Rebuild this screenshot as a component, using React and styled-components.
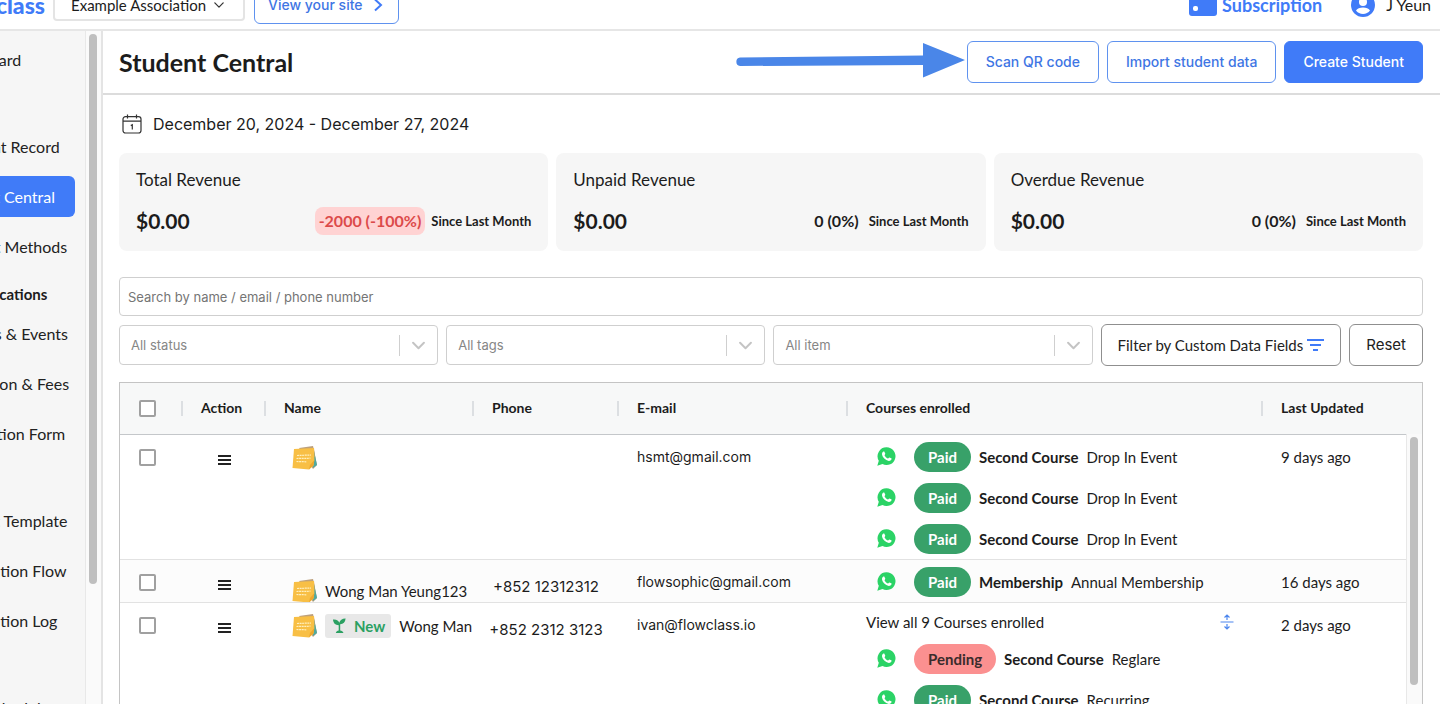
import React from 'react';
import styled, { createGlobalStyle, css } from 'styled-components';

const lato = 'Lato, "Liberation Sans", sans-serif';
const inter = 'Inter, "Liberation Sans", sans-serif';
const blue = '#407bf8';

const GlobalStyle = createGlobalStyle`
  *, *::before, *::after { box-sizing: border-box; }
  body { margin: 0; background: #fff; color: #1c1c1c; font-family: ${lato}; font-size: 16px; line-height: 20px; }
  button, input, select { font: inherit; color: inherit; margin: 0; }
  h1, h2, p, ul { margin: 0; padding: 0; }
  ul { list-style: none; }
`;

const Shell = styled.div`
  display: flex;
  flex-direction: column;
  height: 100vh;
  overflow: hidden;
`;

const TopBar = styled.header`
  flex: none;
  display: flex;
  align-items: center;
  height: 50px;
  margin-top: -19px;
  padding-right: 9px;
  border-bottom: 2px solid #e6e6e6;
`;

const Logo = styled.a`
  margin-left: -48px;
  width: 93px;
  display: flex;
  justify-content: flex-end;
  font: 900 23px/28px ${lato};
  color: ${blue};
  text-decoration: none;
`;

const OrgButton = styled.button`
  display: flex;
  align-items: center;
  gap: 8px;
  height: 32px;
  margin-left: 8px;
  padding: 0 19px 0 16px;
  border: 2px solid #e4e4e4;
  border-radius: 4px;
  background: #fff;
  font-size: 15px;
  white-space: nowrap;
`;

const Button = styled.button`
  display: flex;
  align-items: center;
  justify-content: center;
  gap: 4px;
  height: 42px;
  padding: 0 ${(p) => (p.$plain ? '16px' : '18px')};
  border: 1px solid ${(p) => (p.$plain ? '#8f8f8f' : '#5f92ef')};
  border-radius: 6px;
  background: #fff;
  color: ${(p) => (p.$plain ? '#222' : '#3f76e4')};
  font: ${(p) => (p.$plain ? '400 15px' : '500 14px')}/20px ${(p) => (p.$lato ? lato : inter)};
  white-space: nowrap;
  ${(p) => p.$primary && css`
    background: ${blue};
    border-color: ${blue};
    color: #fff;
  `}
`;

const SiteButton = styled(Button)`
  height: 38px;
  margin-left: 9px;
  padding: 0 13px;
  gap: 8px;
`;

const Account = styled.nav`
  display: flex;
  align-items: center;
  margin-left: auto;
`;

const SubscriptionLink = styled.a`
  display: flex;
  align-items: center;
  gap: 5px;
  margin-right: 29px;
  color: ${blue};
  font-size: 18px;
  font-weight: 700;
  text-decoration: none;
`;

const UserButton = styled.button`
  display: flex;
  align-items: center;
  gap: 11px;
  padding: 0;
  border: 0;
  background: none;
`;

const Columns = styled.div`
  flex: 1;
  display: flex;
  min-height: 0;
`;

const Sidebar = styled.aside`
  flex: none;
  display: flex;
  width: 103px;
  background: #f6f6f6;
  border-right: 2px solid #e4e4e4;
`;

const Menu = styled.nav`
  flex: 1;
  margin-left: -70px;
  padding: 8px 10px 0 0;
  overflow: hidden;
`;

const MenuGroup = styled.ul`
  display: flex;
  flex-direction: column;
  gap: 9px;
  & + & { margin-top: 46px; }
`;

const MenuHeading = styled.h2`
  padding: 17px 0 9px 5px;
  font: 700 15px/20px ${lato};
`;

const MenuLink = styled.a`
  display: flex;
  align-items: center;
  height: 41px;
  padding-left: 15px;
  border-radius: 6px;
  color: ${(p) => (p.$active ? '#fff' : '#222')};
  background: ${(p) => (p.$active ? blue : 'transparent')};
  text-decoration: none;
  white-space: nowrap;
`;

const Track = styled.div`
  flex: none;
  width: 16px;
  padding: 3px 4px 0 3px;
  background: #fafafa;
  border-left: 1px solid #e8e8e8;
`;

const Thumb = styled.div`
  width: 8px;
  height: ${(p) => p.$length};
  border-radius: 4px;
  background: #bfbfbf;
`;

const Main = styled.main`
  flex: 1;
  min-width: 0;
  overflow: hidden;
`;

const TitleBar = styled.div`
  display: flex;
  align-items: center;
  gap: 8px;
  height: 64px;
  padding: 0 17px 0 16px;
  border-bottom: 2px solid #dcdcdc;
`;

const Title = styled.h1`
  flex: 1;
  font: 700 25px/32px ${lato};
`;

const Pointer = styled.svg`
  flex: none;
  margin-right: -6px;
`;

const Content = styled.div`
  padding: 18px 17px 0 16px;
`;

const DateRange = styled.div`
  display: flex;
  align-items: center;
  gap: 11px;
  height: 22px;
  padding-left: 3px;
  font: 400 16px/22px ${inter};
`;

const Cards = styled.div`
  display: grid;
  grid-template-columns: repeat(3, 1fr);
  gap: 8px;
  margin-top: 18px;
`;

const Card = styled.section`
  display: flex;
  flex-direction: column;
  gap: 16px;
  height: 98px;
  padding: 17px 17px 0;
  border-radius: 8px;
  background: #f6f6f6;
`;

const CardTitle = styled.h2`
  font: 400 17px/20px ${lato};
`;

const CardRow = styled.div`
  display: flex;
  align-items: center;
  height: 30px;
`;

const Amount = styled.strong`
  flex: 1;
  font-size: 21px;
`;

const Change = styled.span`
  padding: 4px;
  border-radius: 8px;
  font: 700 16px/20px ${lato};
  ${(p) => p.$down && css`
    background: #ffd3d3;
    color: #dc4a4a;
  `}
`;

const Since = styled.span`
  margin-left: 6px;
  font-size: 13px;
  font-weight: 700;
`;

const Search = styled.input`
  display: block;
  width: 100%;
  height: 39px;
  margin-top: 26px;
  padding: 0 8px;
  border: 1px solid #cfcfcf;
  border-radius: 4px;
  font: 400 13px/20px ${inter};
  &::placeholder { color: #757575; opacity: 1; }
`;

const Filters = styled.div`
  display: flex;
  align-items: center;
  gap: 8px;
  margin-top: 8px;
`;

const SelectBox = styled.label`
  position: relative;
  flex: 1;
  height: 40px;
`;

const Select = styled.select`
  appearance: none;
  width: 100%;
  height: 100%;
  padding: 0 48px 0 11px;
  border: 1px solid #cfcfcf;
  border-radius: 4px;
  background: #fff;
  color: #868686;
  font: 400 13px/20px ${inter};
`;

const SelectMark = styled.span`
  position: absolute;
  top: 10px;
  right: 13px;
  display: flex;
  align-items: center;
  height: 21px;
  padding-left: 12px;
  border-left: 1px solid #cfcfcf;
  pointer-events: none;
`;

const TableFrame = styled.div`
  position: relative;
  height: 400px;
  margin-top: 16px;
  border: 1px solid #c4c4c4;
  overflow: hidden;
`;

const Table = styled.table`
  width: 100%;
  table-layout: fixed;
  border-collapse: collapse;
  font-size: 15px;
`;

const Th = styled.th`
  width: ${(p) => p.$w || 'auto'};
  height: 51px;
  padding: 0 0 0 ${(p) => (p.$first ? '19px' : '20px')};
  border-bottom: 1px solid #c4c7ca;
  background: ${(p) => (p.$first ? '#f7f8f8' : 'linear-gradient(#dcdfe2, #dcdfe2) left center / 2px 15px no-repeat #f7f8f8')};
  font: 700 14px/20px ${lato};
  text-align: left;
`;

const Row = styled.tr`
  background: ${(p) => (p.$shade ? '#fcfcfc' : '#fff')};
  border-bottom: 1px solid #e2e2e2;
`;

const Td = styled.td`
  padding: ${(p) => p.$pad || '12px 0 0 20px'};
  vertical-align: top;
  white-space: nowrap;
  text-align: ${(p) => (p.$center ? 'center' : 'left')};
  ${(p) => p.$email && css`font: 400 14px/20px ${inter};`}
  ${(p) => p.$phone && css`font-family: ${inter};`}
`;

const Check = styled.input`
  appearance: none;
  display: block;
  width: 17px;
  height: 17px;
  border: 2px solid #a0a0a0;
  border-radius: 2px;
  background: #fff;
`;

const IconButton = styled.button`
  display: inline-flex;
  padding: 0;
  border: 0;
  background: none;
`;

const NameLine = styled.div`
  display: flex;
  align-items: center;
  gap: 8px;
  height: ${(p) => (p.$low ? '42px' : '24px')};
  padding-top: ${(p) => (p.$low ? '20px' : '0')};
  overflow: hidden;
`;

const NewBadge = styled.span`
  display: flex;
  align-items: center;
  gap: 8px;
  height: 24px;
  padding: 0 6px 0 8px;
  border-radius: 3px;
  background: #e8e8e8;
  color: #2ba062;
  font-weight: 700;
`;

const CourseList = styled.ul`
  display: flex;
  flex-direction: column;
  gap: 11px;
`;

const Course = styled.li`
  display: flex;
  align-items: center;
  gap: 8px;
  height: 30px;
  padding-left: 11px;
`;

const Pill = styled.span`
  margin-left: 10px;
  padding: 5px 14px;
  border-radius: 15px;
  font-weight: 700;
  background: ${(p) => (p.$pending ? '#fb9090' : '#38a169')};
  color: ${(p) => (p.$pending ? '#3a2c2c' : '#fff')};
`;

const ViewAll = styled.div`
  display: flex;
  justify-content: space-between;
  align-items: center;
  height: 24px;
  padding-right: 27px;
  margin-bottom: 10px;
`;

const TableTrack = styled(Track)`
  position: absolute;
  top: 51px;
  right: 0;
  bottom: 0;
`;

const Chevron = ({ w = 10, color = '#333', stroke = 1.5 }) => (
  <svg width={w} height={w} viewBox="0 0 12 12" fill="none" stroke={color} strokeWidth={stroke} strokeLinecap="round" strokeLinejoin="round">
    <path d="M1 3.500 6 8.500 11 3.500" />
  </svg>
);

const Note = () => (
  <svg width="25" height="24" viewBox="0 0 25 24">
    <path d="M7 2 21 0l1 4 3 15-4 4z" fill="#bda07c" />
    <path d="M20 4l2 1 3 14-4 3z" fill="#4fa9a0" />
    <path d="M19 2l3 0 .5 9-2 0z" fill="#d99a5b" />
    <path d="M2 3 22 2l.4 12-1 5.500-4.400 4L.5 22z" fill="#f8bf45" />
    <path d="M22.400 14l-1 5.500-4.400 4 1-4.500z" fill="#eda72c" />
    <path d="M5 9.500l14-.5M4.500 12.500l14-.3M4.500 15.500l10 .3" stroke="#fff0bf" strokeWidth="1.200" strokeDasharray="2 .6" />
  </svg>
);

const Burger = () => (
  <svg width="13" height="12" viewBox="0 0 13 12" fill="#222">
    <path d="M0 1h13v2H0zM0 5h13v2H0zM0 9h13v2H0z" />
  </svg>
);

const WhatsApp = () => (
  <svg width="19" height="19" viewBox="0 0 19 19">
    <path d="M9.700.300a8.900 8.900 0 1 1-4.200 16.800L.300 18.700l1.500-5A8.900 8.900 0 0 1 9.700.300z" fill="#2bd366" />
    <path d="M6.400 4.600c.5-.2.900-.1 1.100.3l.8 1.900c.1.400-.7 1.200-.8 1.500.7 1.500 1.900 2.600 3.400 3.200.4 0 1.100-1.200 1.500-1.100l1.900.9c.4.200.300.700.1 1.200-.4 1-1.600 1.500-2.600 1.400-3.300-.5-6.500-3.600-6.800-6.600 0-1.200.6-2.400 1.400-2.700z" fill="#fff" />
  </svg>
);

const Sprout = () => (
  <svg width="13" height="16" viewBox="0 0 13 16" fill="#2ba062">
    <path d="M0 1.500c3.500-.3 5.700 1 6.300 3.300C7 2.200 9.200.5 12.600.6c-.3 3.600-2.300 5.600-5.400 5.700v6.200c1.500.2 2.800.9 3.300 2.500H2.800c.4-1.500 1.500-2.300 2.900-2.500V7.200C2.300 7.200.2 5 0 1.500z" />
  </svg>
);

const Calendar = () => (
  <svg width="20" height="20" viewBox="0 0 20 20" fill="none" stroke="#333" strokeWidth="1.200">
    <rect x="1" y="2.600" width="18" height="16.400" rx="2.500" />
    <path d="M1 7.200h18M5.500.5v4M14.500.5v4M8.800 11.600l1.500-.8v4.800" />
  </svg>
);

const FilterIcon = () => (
  <svg width="17" height="12" viewBox="0 0 17 12" fill={blue}>
    <path d="M0 0h17v2H0zM3 5h11v2H3zM6 10h5v2H6z" />
  </svg>
);

const Expand = () => (
  <svg width="14" height="16" viewBox="0 0 14 16" fill="none" stroke="#4c86ee" strokeWidth="1.200">
    <path d="M.5 8h13M7 1v5M7 10v5M4.500 3.500 7 1l2.500 2.500M4.500 12.500 7 15l2.500-2.500" />
  </svg>
);

const menu = [
  { items: ['Dashboard'] },
  { items: ['Payment Record', 'Student Central', 'Contact Methods'] },
  { heading: 'Communications', items: ['Courses & Events', 'Admission & Fees', 'Application Form'] },
  { items: ['Student Template', 'Automation Flow', 'Automation Log'] },
  { items: ['Class Schedule'] },
];

const cards = [
  { title: 'Total Revenue', amount: '$0.00', change: '-2000 (-100%)', down: true },
  { title: 'Unpaid Revenue', amount: '$0.00', change: '0 (0%)' },
  { title: 'Overdue Revenue', amount: '$0.00', change: '0 (0%)' },
];

const dropIn = { status: 'Paid', name: 'Second Course', plan: 'Drop In Event' };

const students = [
  { id: 1, email: 'hsmt@gmail.com', updated: '9 days ago', courses: [dropIn, dropIn, dropIn] },
  {
    id: 2, name: 'Wong Man Yeung123', low: true, phone: '+852 12312312', email: 'flowsophic@gmail.com', updated: '16 days ago',
    courses: [{ status: 'Paid', name: 'Membership', plan: 'Annual Membership' }],
  },
  {
    id: 3, name: 'Wong Man', isNew: true, phone: '+852 2312 3123', email: 'ivan@flowclass.io', updated: '2 days ago', total: 9,
    courses: [
      { status: 'Pending', name: 'Second Course', plan: 'Reglare' },
      { status: 'Paid', name: 'Second Course', plan: 'Recurring' },
    ],
  },
];

function SideMenu() {
  return (
    <Sidebar>
      <Menu aria-label="Main">
        {menu.map((g, i) => (
          <React.Fragment key={i}>
            {g.heading && <MenuHeading>{g.heading}</MenuHeading>}
            <MenuGroup>
              {g.items.map((t) => (
                <li key={t}><MenuLink href="#" $active={t === 'Student Central'}>{t}</MenuLink></li>
              ))}
            </MenuGroup>
          </React.Fragment>
        ))}
      </Menu>
      <Track><Thumb $length="550px" /></Track>
    </Sidebar>
  );
}

function StudentRow({ s }) {
  return (
    <Row $shade={s.low}>
      <Td $pad="14px 0 0 19px"><Check type="checkbox" aria-label={`Select ${s.email}`} /></Td>
      <Td $center $pad="15px 0 0 3px"><IconButton aria-label="Actions"><Burger /></IconButton></Td>
      <Td $pad={s.low ? '0 0 0 28px' : '11px 0 0 28px'}>
        <NameLine $low={s.low}>
          <Note />
          {s.isNew && <NewBadge><Sprout />New</NewBadge>}
          {s.name}
        </NameLine>
      </Td>
      <Td $phone $center $pad="17px 0 0 3px">{s.phone}</Td>
      <Td $email>{s.email}</Td>
      <Td $pad="7px 0 5px 20px">
        {s.total && (
          <ViewAll>
            View all {s.total} Courses enrolled
            <IconButton aria-label="Expand"><Expand /></IconButton>
          </ViewAll>
        )}
        <CourseList>
          {s.courses.map((c, i) => (
            <Course key={i}>
              <WhatsApp />
              <Pill $pending={c.status === 'Pending'}>{c.status}</Pill>
              <strong>{c.name}</strong>
              <span>{c.plan}</span>
            </Course>
          ))}
        </CourseList>
      </Td>
      <Td>{s.updated}</Td>
    </Row>
  );
}

export default function App() {
  return (
    <Shell>
      <GlobalStyle />
      <TopBar>
        <Logo href="#">flowclass</Logo>
        <OrgButton>Example Association <Chevron /></OrgButton>
        <SiteButton>
          View your site
          <svg width="14" height="14" viewBox="0 0 14 14" fill="none" stroke={blue} strokeWidth="2"><path d="M4 1.500 10 7l-6 5.500" /></svg>
        </SiteButton>
        <Account>
          <SubscriptionLink href="#">
            <svg width="28" height="22" viewBox="0 0 28 22"><rect width="28" height="22" rx="3" fill={blue} /><rect x="4" y="12" width="5" height="5" rx="2" fill="#fff" /></svg>
            Subscription
          </SubscriptionLink>
          <UserButton>
            <svg width="24" height="24" viewBox="0 0 24 24"><circle cx="12" cy="12" r="12" fill={blue} /><circle cx="12" cy="9" r="4" fill="#fff" /><path d="M5 17.500c2-4 12-4 14 0-3 4.500-11 4.500-14 0z" fill="#fff" /></svg>
            J Yeun
          </UserButton>
        </Account>
      </TopBar>
      <Columns>
        <SideMenu />
        <Main>
          <TitleBar>
            <Title>Student Central</Title>
            <Pointer width="230" height="40" viewBox="0 0 230 40" fill="#4a86e8">
              <path d="M5 15.500 188 13.500V1L230 18 188 35.500V23L5 24A4.300 4.300 0 0 1 5 15.500z" />
            </Pointer>
            <Button>Scan QR code</Button>
            <Button>Import student data</Button>
            <Button $primary>Create Student</Button>
          </TitleBar>
          <Content>
            <DateRange><Calendar />December 20, 2024 - December 27, 2024</DateRange>
            <Cards>
              {cards.map((c) => (
                <Card key={c.title}>
                  <CardTitle>{c.title}</CardTitle>
                  <CardRow>
                    <Amount>{c.amount}</Amount>
                    <Change $down={c.down}>{c.change}</Change>
                    <Since>Since Last Month</Since>
                  </CardRow>
                </Card>
              ))}
            </Cards>
            <Search aria-label="Search students" placeholder="Search by name / email / phone number" />
            <Filters>
              {['All status', 'All tags', 'All item'].map((t) => (
                <SelectBox key={t}>
                  <Select aria-label={t}><option>{t}</option></Select>
                  <SelectMark><Chevron w={13} color="#c4c4c4" stroke={1.8} /></SelectMark>
                </SelectBox>
              ))}
              <Button $plain $lato>Filter by Custom Data Fields <FilterIcon /></Button>
              <Button $plain>Reset</Button>
            </Filters>
            <TableFrame>
              <Table>
                <thead>
                  <tr>
                    <Th $first $w="61px"><Check type="checkbox" aria-label="Select all" /></Th>
                    <Th $w="83px">Action</Th>
                    <Th $w="208px">Name</Th>
                    <Th $w="145px">Phone</Th>
                    <Th $w="229px">E-mail</Th>
                    <Th>Courses enrolled</Th>
                    <Th $w="161px">Last Updated</Th>
                  </tr>
                </thead>
                <tbody>
                  {students.map((s) => <StudentRow key={s.id} s={s} />)}
                </tbody>
              </Table>
              <TableTrack><Thumb $length="248px" /></TableTrack>
            </TableFrame>
          </Content>
        </Main>
      </Columns>
    </Shell>
  );
}
